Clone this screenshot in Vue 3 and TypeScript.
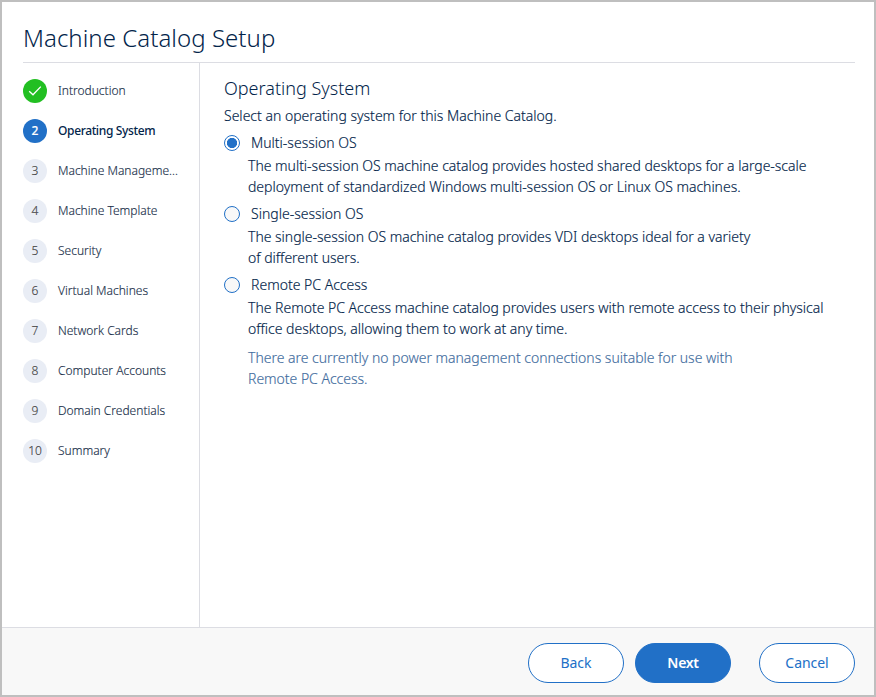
<script setup lang="ts">
import { ref } from 'vue'

type StepState = 'done' | 'current' | 'todo'

interface Step {
  label: string
  state: StepState
}

interface OsOption {
  id: string
  title: string
  lines: string[]
  note?: string[]
}

const steps: Step[] = [
  { label: 'Introduction', state: 'done' },
  { label: 'Operating System', state: 'current' },
  { label: 'Machine Manageme...', state: 'todo' },
  { label: 'Machine Template', state: 'todo' },
  { label: 'Security', state: 'todo' },
  { label: 'Virtual Machines', state: 'todo' },
  { label: 'Network Cards', state: 'todo' },
  { label: 'Computer Accounts', state: 'todo' },
  { label: 'Domain Credentials', state: 'todo' },
  { label: 'Summary', state: 'todo' },
]

const options: OsOption[] = [
  {
    id: 'multi',
    title: 'Multi-session OS',
    lines: [
      'The multi-session OS machine catalog provides hosted shared desktops for a large-scale',
      'deployment of standardized Windows multi-session OS or Linux OS machines.',
    ],
  },
  {
    id: 'single',
    title: 'Single-session OS',
    lines: [
      'The single-session OS machine catalog provides VDI desktops ideal for a variety',
      'of different users.',
    ],
  },
  {
    id: 'remote',
    title: 'Remote PC Access',
    lines: [
      'The Remote PC Access machine catalog provides users with remote access to their physical',
      'office desktops, allowing them to work at any time.',
    ],
    note: [
      'There are currently no power management connections suitable for use with',
      'Remote PC Access.',
    ],
  },
]

const selected = ref('multi')
</script>

<template>
  <div class="dialog">
    <header class="header">
      <h1 class="title">Machine Catalog Setup</h1>
    </header>

    <div class="body">
      <nav class="sidebar">
        <ol class="steps">
          <li v-for="(step, i) in steps" :key="step.label" class="step" :class="step.state">
            <span class="badge">
              <svg v-if="step.state === 'done'" width="24" height="24" viewBox="0 0 24 24" fill="none">
                <path d="M6.2 12.2 L10 15.8 L17.8 7.6" stroke="#fff" stroke-width="1.3" />
              </svg>
              <span v-else class="number">{{ i + 1 }}</span>
            </span>
            <span class="label">{{ step.label }}</span>
          </li>
        </ol>
      </nav>

      <main class="content">
        <h2 class="heading">Operating System</h2>
        <p class="intro">Select an operating system for this Machine Catalog.</p>
        <section v-for="option in options" :key="option.id" class="option">
          <label class="choice">
            <input v-model="selected" class="radio" type="radio" name="os" :value="option.id" />
            <span class="name">{{ option.title }}</span>
          </label>
          <p class="text">
            <span v-for="line in option.lines" :key="line" class="line">{{ line }}</span>
          </p>
          <p v-if="option.note" class="text note">
            <span v-for="line in option.note" :key="line" class="line">{{ line }}</span>
          </p>
        </section>
      </main>
    </div>

    <footer class="footer">
      <button class="btn">Back</button>
      <button class="btn primary">Next</button>
      <button class="btn cancel">Cancel</button>
    </footer>
  </div>
</template>

<style>
body {
  margin: 0;
}
</style>

<style scoped>
.dialog {
  box-sizing: border-box;
  width: 876px;
  height: 697px;
  border: 2px solid #bfbfbf;
  background: #fff;
  color: #02244a;
  font-family: 'Noto Sans', 'Open Sans', sans-serif;
  font-size: 14px;
  font-weight: 350;
  display: flex;
  flex-direction: column;
  overflow: hidden;
}
.header {
  box-sizing: border-box;
  height: 61px;
  margin: 0 19px 0 21px;
  border-bottom: 1px solid #dcdde3;
}
.title {
  margin: 0;
  padding-top: 19px;
  font-size: 24px;
  line-height: 34px;
  font-weight: 350;
  letter-spacing: 0.05px;
  white-space: nowrap;
}
.body {
  flex: 1;
  display: flex;
  min-height: 0;
}
.sidebar {
  box-sizing: border-box;
  width: 198px;
  border-right: 1px solid #dcdde3;
  padding: 16px 0 0 21px;
}
.steps {
  list-style: none;
  margin: 0;
  padding: 0;
  display: flex;
  flex-direction: column;
  gap: 16px;
}
.step {
  display: flex;
  align-items: center;
  gap: 11px;
  height: 24px;
  font-size: 12px;
  color: #1b304a;
  -webkit-text-stroke: 0.15px currentColor;
  white-space: nowrap;
}
.badge {
  width: 24px;
  height: 24px;
  border-radius: 50%;
  background: #e9edf5;
  color: #444;
  display: flex;
  align-items: center;
  justify-content: center;
}
.badge svg {
  display: block;
}
.number,
.label {
  padding-bottom: 2px;
}
.done .badge {
  background: #22bf22;
}
.current .badge {
  background: #2170c7;
  color: #fff;
  font-weight: 500;
}
.current .label {
  color: #02244a;
  font-weight: 500;
  letter-spacing: -0.36px;
  -webkit-text-stroke: 0;
}
.content {
  padding: 12px 0 0 24px;
  white-space: nowrap;
}
.heading {
  margin: 0;
  font-size: 18px;
  line-height: 26px;
  font-weight: 350;
}
.intro {
  margin: 4px 0 5px;
  line-height: 21px;
  -webkit-text-stroke: 0.15px currentColor;
}
.option {
  padding-bottom: 5px;
  -webkit-text-stroke: 0.15px currentColor;
}
.choice {
  display: flex;
  align-items: center;
  gap: 11px;
  height: 24px;
}
.name {
  padding-bottom: 2px;
}
.radio {
  appearance: none;
  box-sizing: border-box;
  width: 16px;
  height: 16px;
  margin: 0;
  border: 1px solid #2170c7;
  border-radius: 50%;
  background: #f8f8f8;
}
.radio:checked {
  background: radial-gradient(circle, #2170c7 4.8px, #fff 5.4px);
}
.text {
  margin: 0 0 0 24px;
  line-height: 21px;
  letter-spacing: -0.02px;
  font-variant-ligatures: none;
}
.line {
  display: block;
}
.note {
  margin-top: 8px;
  color: #3f6c9e;
}
.footer {
  box-sizing: border-box;
  height: 68px;
  border-top: 1px solid #dcdde3;
  background: #f8f8f8;
  display: flex;
  justify-content: flex-end;
  gap: 11px;
  padding: 15px 19px 0 0;
}
.btn {
  box-sizing: border-box;
  width: 96px;
  height: 40px;
  border: 1px solid #2170c7;
  border-radius: 20px;
  background: #fff;
  color: #2170c7;
  padding: 0 0 2px;
  font-family: inherit;
  font-size: 14px;
  font-weight: 400;
  letter-spacing: -0.05px;
}
.primary {
  background: #2170c7;
  color: #fff;
  font-weight: 600;
  letter-spacing: -0.3px;
}
.cancel {
  margin-left: 17px;
}
</style>
